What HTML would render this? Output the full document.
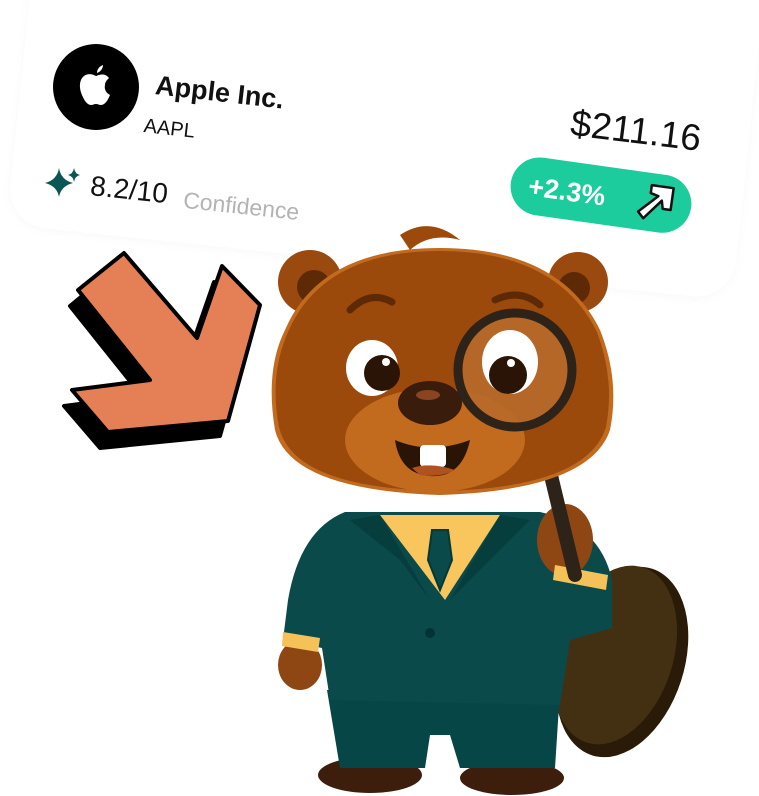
<!DOCTYPE html>
<html><head><meta charset="utf-8"><style>
html,body{margin:0;padding:0;background:#fff;width:759px;height:796px;overflow:hidden}
svg{display:block}
text{font-family:"Liberation Sans",sans-serif}
</style></head><body>
<svg width="759" height="796" viewBox="0 0 759 796" xmlns="http://www.w3.org/2000/svg">
<defs>
<filter id="sh" x="-10%" y="-10%" width="120%" height="130%"><feGaussianBlur stdDeviation="4"/></filter>
</defs>
<!-- card -->
<g transform="rotate(6 380 130)">
<rect x="18" y="-70" width="730" height="335" rx="40" fill="#f2f2f2" filter="url(#sh)" opacity="0.5"/>
<rect x="18" y="-72" width="730" height="335" rx="40" fill="#fff"/>
</g>
<!-- apple logo -->
<circle cx="96" cy="87" r="43" fill="#000"/>
<path d="M96 76c-4-2-8-3-12 0c-5 4-5 12-2 19c2 5 5 10 9 10c2 0 3-1 5-1s3 1 5 1c4 0 7-5 9-10c-4-2-6-6-5-10c0-3 2-5 4-7c-3-4-7-4-10-3c-1 0-2 1-3 1z M97 73c0-4 3-7 6-8c0 4-3 7-6 8z" fill="#fff"/>
<g transform="rotate(6.5 155 90)">
<text x="155" y="94" font-size="27" font-weight="bold" fill="#111">Apple Inc.</text>
<text x="148" y="133" font-size="20" fill="#111">AAPL</text>
</g>
<g transform="rotate(6 90 190)">
<text x="90" y="195" font-size="28" fill="#111">8.2/10</text>
<text x="184" y="198" font-size="23" fill="#b3b3b3">Confidence</text>
</g>
<!-- sparkles -->
<path d="M59 168 Q61 180 73 183 Q61 186 59 197 Q57 186 45 183 Q57 180 59 168Z" fill="#0b5555"/>
<path d="M74 168 Q75 174 80 175 Q75 176 74 182 Q73 176 68 175 Q73 174 74 168Z" fill="#0b5555"/>
<g transform="rotate(7 570 130)">
<text x="570" y="135" font-size="37" fill="#111">$211.16</text>
</g>
<!-- pill -->
<g transform="rotate(8 600 195)">
<rect x="510" y="166" width="182" height="58" rx="29" fill="#1ccc9c"/>
<text x="528" y="205" font-size="27" font-weight="bold" fill="#fff">+2.3%</text>
<path d="M640 206 L658 188 L650 186 L650 178 L672 178 L672 200 L664 200 L662 192 L646 212Z" fill="#fff" stroke="#111" stroke-width="2.5" stroke-linejoin="round"/>
</g>
<!-- arrow -->
<g stroke="#000" stroke-width="4" stroke-linejoin="round">
<path d="M70 306 L116 268 L189 354 L214 282 L252 321 L220 436 L100 448 L64 406 L142 396Z" fill="#000"/>
<path d="M78 290 L124 253 L197 338 L222 266 L260 305 L228 421 L108 432 L72 390 L150 380Z" fill="#e57f55"/>
</g>
<!-- tail -->
<ellipse cx="622" cy="662" rx="62" ry="98" transform="rotate(18 622 662)" fill="#2a1a08"/>
<ellipse cx="615" cy="655" rx="58" ry="92" transform="rotate(18 615 655)" fill="#433012"/>
<!-- feet -->
<ellipse cx="370" cy="775" rx="52" ry="18" fill="#3d1e0c"/>
<ellipse cx="512" cy="778" rx="52" ry="17" fill="#3d1e0c"/>
<!-- pants -->
<path d="M327 690 L560 690 L555 768 L460 768 L450 735 L430 735 L425 768 L340 768Z" fill="#074646"/>
<!-- left hand -->
<ellipse cx="300" cy="665" rx="22" ry="25" fill="#8e4613"/>
<!-- jacket -->
<path d="M345 512 Q300 530 288 600 L283 640 L322 648 L330 700 L560 705 L570 640 L612 628 L612 580 Q600 525 540 512 Z" fill="#0a4a4a"/>
<path d="M283 632 L320 638 L318 652 L282 646Z" fill="#f5c25a"/>
<path d="M380 515 L500 515 L445 600 Z" fill="#f8c65c"/>
<path d="M432 530 L448 530 L452 560 L440 590 L428 560Z" fill="#0a4a4a" stroke="#063838" stroke-width="2"/>
<path d="M350 520 L380 515 L430 600 L400 560Z M530 520 L500 515 L450 600 L490 560Z" fill="#063d3d"/>
<circle cx="430" cy="633" r="5" fill="#043333"/>
<!-- right arm / hand -->
<ellipse cx="565" cy="540" rx="28" ry="36" fill="#8e4613"/>
<path d="M555 565 L608 575 L606 590 L553 580Z" fill="#f5c25a"/>
<!-- magnifier handle -->
<path d="M540 430 L575 575" stroke="#2d2318" stroke-width="14" stroke-linecap="round"/>
<!-- ears -->
<circle cx="310" cy="282" r="32" fill="#9a4a0e"/>
<circle cx="314" cy="287" r="17" fill="#5e2a05"/>
<circle cx="578" cy="282" r="30" fill="#9a4a0e"/>
<circle cx="574" cy="288" r="16" fill="#5e2a05"/>
<!-- head -->
<path d="M440 248 Q560 248 600 330 Q620 380 610 430 Q590 490 440 495 Q290 490 275 430 Q265 370 285 330 Q320 248 440 248Z" fill="#c26a1e"/>
<path d="M440 251 Q557 251 597 332 Q615 380 606 427 Q587 488 440 491 Q293 488 279 427 Q269 375 288 332 Q323 251 440 251Z" fill="#9b4a0b"/>
<path d="M400 235 Q430 215 460 240 Q430 232 410 250Z" fill="#9b4a0b"/>
<!-- muzzle -->
<ellipse cx="435" cy="440" rx="90" ry="52" fill="#c26a1e"/>
<!-- brows -->
<path d="M350 310 Q370 290 392 302" stroke="#5e2a05" stroke-width="7" fill="none" stroke-linecap="round"/>
<path d="M495 300 Q520 288 540 305" stroke="#5e2a05" stroke-width="7" fill="none" stroke-linecap="round"/>
<!-- left eye -->
<ellipse cx="372" cy="368" rx="26" ry="28" fill="#fff"/>
<circle cx="382" cy="373" r="18" fill="#2a1406"/>
<circle cx="386" cy="362" r="4" fill="#fff"/>
<!-- mouth -->
<path d="M395 440 Q430 455 470 440 Q462 478 430 476 Q400 474 395 440Z" fill="#2a1406"/>
<rect x="420" y="445" width="26" height="22" rx="4" fill="#fff"/>
<path d="M412 468 Q430 462 455 470 Q440 478 420 475Z" fill="#b0521e"/>
<!-- nose -->
<ellipse cx="430" cy="403" rx="32" ry="22" fill="#3a1c0c"/>
<ellipse cx="428" cy="395" rx="12" ry="5" fill="#8a4520"/>
<!-- magnifier lens -->
<circle cx="515" cy="370" r="55" fill="#b86a2a" opacity="0.9"/>
<ellipse cx="510" cy="362" rx="28" ry="32" fill="#fff"/>
<circle cx="508" cy="375" r="19" fill="#2a1406"/>
<circle cx="511" cy="363" r="4" fill="#fff"/>
<circle cx="515" cy="370" r="57" fill="none" stroke="#2d2318" stroke-width="9"/>
</svg>
</body></html>
